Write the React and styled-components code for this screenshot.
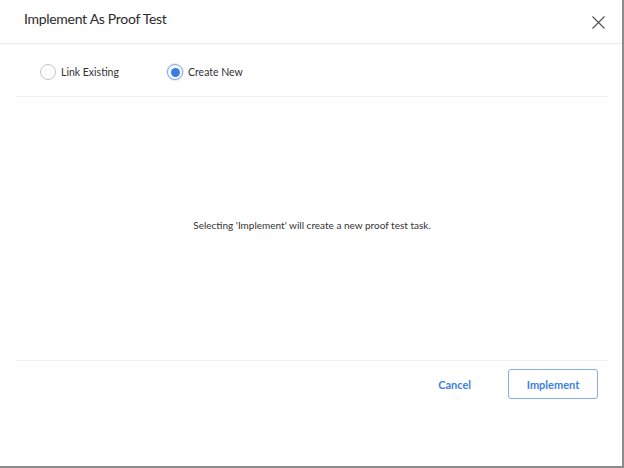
import React, { useState } from 'react';
import styled, { createGlobalStyle } from 'styled-components';

const GlobalStyle = createGlobalStyle`
  html, body {
    margin: 0;
    padding: 0;
    background: #ffffff;
  }
  body {
    font-family: Lato, "Open Sans", sans-serif;
    color: #333;
  }
`;

export default function App() {
  const [mode, setMode] = useState('create');

  return (
    <>
      <GlobalStyle />
      <Dialog>
        <Header>
          <Title>Implement As Proof Test</Title>
          <CloseButton aria-label="close">
            <svg width="13" height="13" viewBox="0 0 13 13">
              <path d="M0.5 0.5 L12.5 12.5 M12.5 0.5 L0.5 12.5" stroke="#555" strokeWidth="1.2" fill="none" />
            </svg>
          </CloseButton>
        </Header>
        <Content>
          <RadioRow>
            <RadioLabel onClick={() => setMode('link')}>
              <RadioCircle checked={mode === 'link'} />
              Link Existing
            </RadioLabel>
            <RadioLabel onClick={() => setMode('create')}>
              <RadioCircle checked={mode === 'create'} />
              Create New
            </RadioLabel>
          </RadioRow>
          <Message>Selecting 'Implement' will create a new proof test task.</Message>
          <Footer>
            <TextButton>Cancel</TextButton>
            <OutlineButton>Implement</OutlineButton>
          </Footer>
        </Content>
      </Dialog>
    </>
  );
}

const Dialog = styled.div`
  width: 622px;
  height: 466px;
  border-right: 2px solid #8c8c8c;
  border-bottom: 2px solid #8c8c8c;
  background: #fff;
  display: flex;
  flex-direction: column;
`;

const Header = styled.div`
  height: 44px;
  border-bottom: 1px solid #ececec;
  display: flex;
  align-items: center;
  justify-content: space-between;
  padding: 0 17px 0 24px;
  box-sizing: border-box;
  box-shadow: 0 1px 2px rgba(0, 0, 0, 0.03);
`;

const Title = styled.h1`
  margin: 0 0 6px;
  font-size: 14px;
  font-weight: 400;
  color: #2b2b2b;
  letter-spacing: -0.3px;
`;

const CloseButton = styled.button`
  border: none;
  background: none;
  padding: 0;
  display: flex;
  margin-top: 2px;
  cursor: pointer;
`;

const Content = styled.div`
  flex: 1;
  display: flex;
  flex-direction: column;
  padding: 0 14px 0 16px;
`;

const RadioRow = styled.div`
  height: 53px;
  border-bottom: 1px solid #f0f0f0;
  display: grid;
  grid-template-columns: 127px auto;
  align-items: center;
  padding: 4px 0 0 24px;
  box-sizing: border-box;
`;

const RadioLabel = styled.label`
  display: flex;
  align-items: center;
  gap: 5px;
  font-size: 10.5px;
  color: #333;
  cursor: pointer;
`;

const RadioCircle = styled.span`
  width: 16px;
  height: 16px;
  border-radius: 50%;
  border: 1px solid ${p => (p.checked ? '#7fa9ec' : '#c4c4c4')};
  box-shadow: ${p => (p.checked ? '0 0 0 1px rgba(127,169,236,0.25)' : 'none')};
  box-sizing: border-box;
  display: flex;
  align-items: center;
  justify-content: center;
  background: #fff;
  &::after {
    content: '';
    width: 9px;
    height: 9px;
    border-radius: 50%;
    background: #3b7de2;
    display: ${p => (p.checked ? 'block' : 'none')};
  }
`;

const Message = styled.div`
  flex: 1;
  display: flex;
  align-items: center;
  justify-content: center;
  font-size: 10px;
  color: #333;
  border-bottom: 1px solid #f0f0f0;
  padding-bottom: 8px;
`;

const Footer = styled.div`
  height: 105px;
  display: flex;
  align-items: flex-start;
  justify-content: flex-end;
  gap: 37px;
  padding: 8px 10px 0 0;
  box-sizing: border-box;
`;

const TextButton = styled.button`
  border: none;
  background: none;
  font-family: Lato, sans-serif;
  font-size: 11px;
  font-weight: 700;
  color: #3d7fdf;
  height: 30px;
  padding: 0;
  cursor: pointer;
`;

const OutlineButton = styled.button`
  width: 90px;
  height: 30px;
  border: 1px solid #86acec;
  border-radius: 3px;
  background: #fff;
  font-family: Lato, sans-serif;
  font-size: 11px;
  font-weight: 700;
  color: #3d7fdf;
  cursor: pointer;
`;
